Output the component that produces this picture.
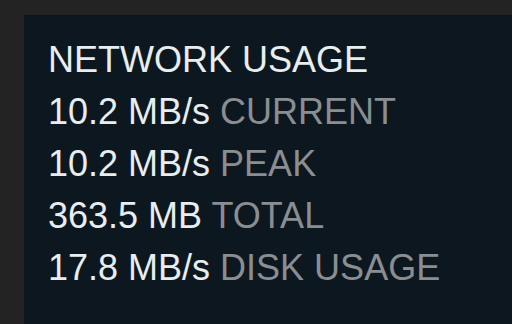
import React from 'react'

const rows = [
  { value: '10.2 MB/s', label: 'CURRENT' },
  { value: '10.2 MB/s', label: 'PEAK' },
  { value: '363.5 MB', label: 'TOTAL' },
  { value: '17.8 MB/s', label: 'DISK USAGE' },
]

const App = () => {
  return (
    <div className="w-[512px] h-[324px] bg-[#232323] pl-[24px] pt-[15px] overflow-hidden" style={{ fontFamily: '"Liberation Sans", Arial, sans-serif' }}>
      <div className="h-full bg-[#0d1720] pl-[24px] pt-[19px] text-[36px] leading-[52px]">
        <h2 className="text-[#e8eef0] font-normal">NETWORK USAGE</h2>
        {rows.map((row, i) => (
          <div key={i} className="whitespace-nowrap">
            <span className="text-[#e8eef0]">{row.value}</span>{' '}
            <span className="text-[#8a8e91]">{row.label}</span>
          </div>
        ))}
      </div>
    </div>
  )
}

export default App
